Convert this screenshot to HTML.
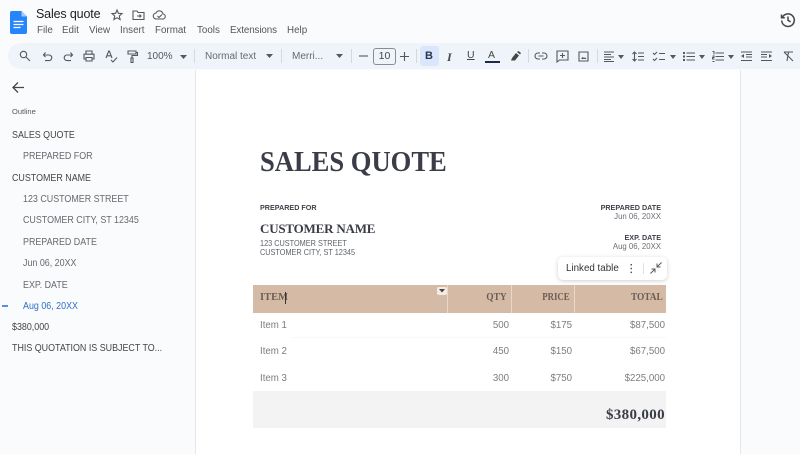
<!DOCTYPE html>
<html><head><meta charset="utf-8"><style>
html,body{margin:0;padding:0;width:800px;height:454px;overflow:hidden}
body{position:relative;background:#f9fbfd;font-family:"Liberation Sans",sans-serif;color:#444746}
.t{position:absolute;white-space:nowrap;line-height:1}
.r{text-align:right}
svg{position:absolute;overflow:visible}
.i{fill:none;stroke:#555859;stroke-width:1.1}
.f{fill:#555859;stroke:none}
.s{font-family:"Liberation Serif",serif;font-weight:bold}
.m{font-size:9.8px;color:#555859;top:26px}
.o{font-size:10.2px;color:#444746;transform:scaleX(.874);transform-origin:0 0}
.a{font-size:8.5px;color:#5f6368;transform:scaleX(.86);transform-origin:0 0}
.d{position:absolute;width:1px;background:#d5d8dc;top:49px;height:14px}
.h{font-size:10.5px;color:#6b5c54;top:293px;transform-origin:100% 0}
</style></head><body>

<svg style="left:10px;top:11px" width="18" height="23" viewBox="0 0 18 23"><path d="M2 0H11.500L17 5.500V21a2 2 0 0 1-2 2H2a2 2 0 0 1-2-2V2a2 2 0 0 1 2-2z" fill="#2684fc"/><path d="M11.500 0L17 5.500H11.500z" fill="#a6c8fa"/><path d="M3.500 10.500h10M3.500 13.500h10M3.500 16.500h7" stroke="#fff" stroke-width="1.200"/></svg>

<div class="t" style="left:36px;top:8px;font-size:12.500px;letter-spacing:-.15px;color:#1f1f1f">Sales quote</div>
<svg style="left:111px;top:9px" width="12" height="12" viewBox="0 0 12 12"><path class="i" d="M6 1l1.400 3.300 3.600.3-2.700 2.400.8 3.500L6 8.700 2.900 10.500l.8-3.500L1 4.600l3.600-.3z"/></svg>
<svg style="left:132px;top:9px" width="13" height="12" viewBox="0 0 13 12"><path class="i" d="M1 2h4l1 1.500h6v7H1zM5 7h4M7.500 5.500L9 7 7.500 8.500"/></svg>
<svg style="left:153px;top:9px" width="13" height="12" viewBox="0 0 13 12"><path class="i" d="M3.500 10h6a2.500 2.500 0 0 0 .5-5A3.700 3.700 0 0 0 3 4a3 3 0 0 0 .5 6zM4.500 7l1.500 1.500L9 5.500"/></svg>

<div class="t m" style="left:37px">File</div>
<div class="t m" style="left:62px">Edit</div>
<div class="t m" style="left:89px">View</div>
<div class="t m" style="left:120px">Insert</div>
<div class="t m" style="left:155px">Format</div>
<div class="t m" style="left:197px">Tools</div>
<div class="t m" style="left:230px;letter-spacing:-.1px">Extensions</div>
<div class="t m" style="left:287px">Help</div>

<svg style="left:780px;top:12px" width="16" height="16" viewBox="0 0 16 16"><path d="M2.300 5.500A6.300 6.300 0 1 1 1.700 8.500M1.500 2.500v3.300h3.300M8 4.500V8.300l2.600 1.600" fill="none" stroke="#444746" stroke-width="1.500"/></svg>

<div style="position:absolute;left:8px;top:43px;width:792px;height:26px;background:#eff3fa;border-radius:13px 0 0 13px"></div>

<svg style="left:19px;top:50px" width="12" height="12" viewBox="0 0 12 12"><circle class="i" cx="4.500" cy="4.500" r="3.200"/><path class="i" d="M7 7l4 4"/></svg>
<svg style="left:42px;top:51px" width="11" height="11" viewBox="0 0 11 11"><path class="i" d="M2 4h5a2.800 2.800 0 0 1 0 5.600H3M3.500 1.500L1.500 4l2 2"/></svg>
<svg style="left:63px;top:51px" width="11" height="11" viewBox="0 0 11 11"><path class="i" d="M9 4H4a2.800 2.800 0 0 0 0 5.600H8M7.500 1.500L9.500 4l-2 2"/></svg>
<svg style="left:83px;top:50px" width="12" height="12" viewBox="0 0 12 12"><path class="i" d="M3 4V1h6v3M3 9H1V4.200h10V9H9M3 7.500h6V11H3z"/></svg>
<svg style="left:105px;top:50px" width="13" height="13" viewBox="0 0 13 13"><path class="i" d="M1 8L3.700 1h.6L7 8M2 5.800h4M6 10l2 2 4-4.500"/></svg>
<svg style="left:126px;top:50px" width="12" height="13" viewBox="0 0 12 13"><path class="i" d="M2 1h8v3H2zM10 2.500h1.500v3H6V8M5 8h2v4.500H5z"/></svg>
<div class="t" style="left:147px;top:52px;font-size:10px;color:#555859">100%</div>
<svg style="left:180px;top:55px" width="7" height="4"><path class="f" d="M0 0h7L3.500 4z"/></svg>
<div class="d" style="left:194px"></div>
<div class="t" style="left:205px;top:52px;font-size:10px;color:#666a6e">Normal text</div>
<svg style="left:266px;top:54px" width="7" height="4"><path class="f" d="M0 0h7L3.500 4z"/></svg>
<div class="d" style="left:281px"></div>
<div class="t" style="left:292px;top:52px;font-size:10px;color:#666a6e">Merri...</div>
<svg style="left:336px;top:54px" width="7" height="4"><path class="f" d="M0 0h7L3.500 4z"/></svg>
<div class="d" style="left:351px"></div>
<svg style="left:359px;top:51px" width="10" height="10"><path class="i" d="M0 5h9"/></svg>
<div style="position:absolute;left:373px;top:48px;width:21px;height:15px;border:1px solid #8a8d8f;border-radius:3px"></div>
<div class="t" style="left:373px;top:51px;width:23px;text-align:center;font-size:10.500px;color:#444746">10</div>
<svg style="left:400px;top:52px" width="10" height="10"><path class="i" d="M0 4.500h9M4.500 0v9"/></svg>
<div class="d" style="left:416px"></div>
<div style="position:absolute;left:420px;top:46px;width:19px;height:20px;background:#d9e6fb;border-radius:3px"></div>
<div class="t" style="left:425px;top:51px;font-size:11px;font-weight:bold;color:#27364f">B</div>
<div class="t" style="left:447px;top:51px;font-size:12px;font-style:italic;font-family:'Liberation Serif',serif;font-weight:bold;color:#444746">I</div>
<div class="t" style="left:467px;top:50px;font-size:10.500px;text-decoration:underline;color:#444746">U</div>
<div class="t" style="left:488px;top:50px;font-size:10.500px;color:#444746">A</div>
<div style="position:absolute;left:485px;top:61px;width:15px;height:2px;background:#1f2a44"></div>
<svg style="left:510px;top:50px" width="12" height="12" viewBox="0 0 12 12"><path d="M1 10.500l1-2.500 4-5 3 2.500-4 5z" fill="#444746"/><path d="M7 2l1.500-1 2.500 2-1 1.500z" fill="#444746"/></svg>
<div class="d" style="left:528px"></div>
<svg style="left:535px;top:51px" width="12" height="10" viewBox="0 0 12 10"><path class="i" d="M5 2H3a3 3 0 0 0 0 6h2M7 2h2a3 3 0 0 1 0 6H7M3.500 5h5"/></svg>
<svg style="left:556px;top:50px" width="13" height="13" viewBox="0 0 13 13"><path class="i" d="M1 1h11v9H3.500L1 12zM6.500 3v5M4 5.500h5"/></svg>
<svg style="left:578px;top:51px" width="11" height="11" viewBox="0 0 11 11"><path class="i" d="M1 1h9v9H1z"/><path class="f" d="M3 8l1.800-2.200 1.200 1.400 1-1L8.500 8z"/></svg>
<div class="d" style="left:597px"></div>
<svg style="left:604px;top:51px" width="11" height="11" viewBox="0 0 11 11"><path class="i" style="stroke-width:1" d="M0 1h10M0 3.500h7M0 6h10M0 8.500h7M0 10.500h10"/></svg>
<svg style="left:618px;top:55px" width="6" height="4"><path class="f" d="M0 0h6L3 4z"/></svg>
<svg style="left:632px;top:51px" width="12" height="11" viewBox="0 0 12 11"><path class="i" d="M2.500 1v9M.5 3l2-2 2 2M.5 8l2 2 2-2M6 2h6M6 5.500h6M6 9h6"/></svg>
<svg style="left:653px;top:51px" width="12" height="11" viewBox="0 0 12 11"><path class="i" d="M0 2l1.500 1.500L4 1M0 8l1.500 1.500L4 7M6 2.500h6M6 8.500h6"/></svg>
<svg style="left:670px;top:55px" width="6" height="4"><path class="f" d="M0 0h6L3 4z"/></svg>
<svg style="left:683px;top:51px" width="12" height="11" viewBox="0 0 12 11"><path class="i" d="M3.500 2h8.500M3.500 5.500h8.500M3.500 9h8.500"/><path class="f" d="M0 1h2v2H0zM0 4.500h2v2H0zM0 8h2v2H0z"/></svg>
<svg style="left:699px;top:55px" width="6" height="4"><path class="f" d="M0 0h6L3 4z"/></svg>
<svg style="left:712px;top:51px" width="12" height="11" viewBox="0 0 12 11"><path class="i" style="stroke-width:1" d="M3.500 2h8.500M3.500 5.500h8.500M3.500 9h8.500M.5 .5h1.500v3M.5 5h1.500v1.500h-1.500V8h2M.5 10.500h2"/></svg>
<svg style="left:728px;top:55px" width="6" height="4"><path class="f" d="M0 0h6L3 4z"/></svg>
<svg style="left:741px;top:51px" width="12" height="11" viewBox="0 0 12 11"><path class="i" style="stroke-width:1" d="M0 1h11M5 3.500h6M5 6h6M0 9.500h11"/><path class="f" d="M3 3v4L0 5z"/></svg>
<svg style="left:761px;top:51px" width="12" height="11" viewBox="0 0 12 11"><path class="i" style="stroke-width:1" d="M0 1h11M0 3.500h6M0 6h6M0 9.500h11"/><path class="f" d="M8 3v4l3-2z"/></svg>
<svg style="left:783px;top:51px" width="12" height="11" viewBox="0 0 12 11"><path class="i" d="M1 1h9M5.500 1L4 10M1 1l9 9"/></svg>

<svg style="left:12px;top:81px" width="13" height="13" viewBox="0 0 13 13"><path d="M12 6.500H1.500M6 1.500L1 6.500l5 5" fill="none" stroke="#444746" stroke-width="1.300"/></svg>
<div class="t" style="left:12px;top:108px;font-size:7.500px;color:#555859">Outline</div>
<div class="t o" style="left:12px;top:131px">SALES QUOTE</div>
<div class="t o" style="left:23px;top:152px;color:#666a6e">PREPARED FOR</div>
<div class="t o" style="left:12px;top:174px">CUSTOMER NAME</div>
<div class="t o" style="left:23px;top:195px;color:#666a6e">123 CUSTOMER STREET</div>
<div class="t o" style="left:23px;top:216px;color:#666a6e">CUSTOMER CITY, ST 12345</div>
<div class="t o" style="left:23px;top:238px;color:#666a6e">PREPARED DATE</div>
<div class="t o" style="left:23px;top:259px;color:#666a6e">Jun 06, 20XX</div>
<div class="t o" style="left:23px;top:281px;color:#666a6e">EXP. DATE</div>
<div style="position:absolute;left:2px;top:305px;width:6px;height:1.500px;background:#5a8fdc"></div>
<div class="t o" style="left:23px;top:302px;color:#2f6fc6">Aug 06, 20XX</div>
<div class="t o" style="left:12px;top:323px">$380,000</div>
<div class="t o" style="left:12px;top:344px">THIS QUOTATION IS SUBJECT TO...</div>

<div style="position:absolute;left:195px;top:70px;width:544px;height:384px;background:#fff;border-left:1px solid #e3e6ea;border-right:1px solid #e3e6ea"></div>

<div class="t s" style="left:260px;top:148px;font-size:29px;color:#3a3d47;transform:scaleX(.916);transform-origin:0 0">SALES QUOTE</div>
<div class="t" style="left:260px;top:204px;font-size:7.200px;font-weight:bold;color:#3f424a">PREPARED FOR</div>
<div class="t s" style="left:260px;top:221.500px;font-size:13px;letter-spacing:-.2px;color:#3a3d47">CUSTOMER NAME</div>
<div class="t a" style="left:260px;top:239px">123 CUSTOMER STREET</div>
<div class="t a" style="left:260px;top:248px">CUSTOMER CITY, ST 12345</div>

<div class="t r" style="right:139px;top:204px;font-size:7.200px;font-weight:bold;color:#3f424a">PREPARED DATE</div>
<div class="t r" style="right:139px;top:213px;font-size:7.800px;color:#6b6e73">Jun 06, 20XX</div>
<div class="t r" style="right:139px;top:234px;font-size:7.200px;font-weight:bold;color:#3f424a">EXP. DATE</div>
<div class="t r" style="right:139px;top:243px;font-size:7.800px;color:#6b6e73">Aug 06, 20XX</div>

<div style="position:absolute;left:253px;top:285px;width:413px;height:28px;background:#d5bba5"></div>
<div style="position:absolute;left:447px;top:285px;width:1px;height:28px;background:#e6d8cc"></div>
<div style="position:absolute;left:511px;top:285px;width:1px;height:28px;background:#e6d8cc"></div>
<div style="position:absolute;left:574px;top:285px;width:1px;height:28px;background:#e6d8cc"></div>
<div style="position:absolute;left:437px;top:287px;width:10px;height:8px;background:#f3ebe4;border-radius:2px"></div>
<svg style="left:439px;top:289px" width="6" height="4"><path d="M0 0h6L3 3.500z" fill="#444"/></svg>
<div class="t s" style="left:260px;top:293px;font-size:10.500px;color:#6b5c54">ITEM</div>
<div style="position:absolute;left:285px;top:292px;width:1px;height:12px;background:#333"></div>
<div class="t s r h" style="right:293px;transform:scaleX(.9)">QTY</div>
<div class="t s r h" style="right:230px;transform:scaleX(.84)">PRICE</div>
<div class="t s r h" style="right:137px;transform:scaleX(.89)">TOTAL</div>

<div style="position:absolute;left:290px;top:337px;width:376px;height:1px;background:#f7f8f8"></div>
<div class="t" style="left:260px;top:321px;font-size:9.700px;color:#7d7d7d">Item 1</div>
<div class="t r" style="right:291px;top:321px;font-size:9.700px;color:#7d7d7d">500</div>
<div class="t r" style="right:228px;top:321px;font-size:9.700px;color:#7d7d7d">$175</div>
<div class="t r" style="right:135px;top:321px;font-size:9.700px;color:#7d7d7d">$87,500</div>
<div class="t" style="left:260px;top:346.500px;font-size:9.700px;color:#7d7d7d">Item 2</div>
<div class="t r" style="right:291px;top:346.500px;font-size:9.700px;color:#7d7d7d">450</div>
<div class="t r" style="right:228px;top:346.500px;font-size:9.700px;color:#7d7d7d">$150</div>
<div class="t r" style="right:135px;top:346.500px;font-size:9.700px;color:#7d7d7d">$67,500</div>
<div class="t" style="left:260px;top:373.500px;font-size:9.700px;color:#7d7d7d">Item 3</div>
<div class="t r" style="right:291px;top:373.500px;font-size:9.700px;color:#7d7d7d">300</div>
<div class="t r" style="right:228px;top:373.500px;font-size:9.700px;color:#7d7d7d">$750</div>
<div class="t r" style="right:135px;top:373.500px;font-size:9.700px;color:#7d7d7d">$225,000</div>

<div style="position:absolute;left:253px;top:391px;width:413px;height:37px;background:#f3f3f3"></div>
<div class="t s r" style="right:135px;top:408px;font-size:15px;color:#3a3d47;letter-spacing:.35px">$380,000</div>

<div style="position:absolute;left:558px;top:257px;width:109px;height:23px;background:#fff;border-radius:5px;box-shadow:0 1px 4px rgba(60,64,67,.25)"></div>
<div class="t" style="left:566px;top:263.500px;font-size:10.300px;color:#333;transform:scaleX(.95);transform-origin:0 0">Linked table</div>
<svg style="left:630px;top:264px" width="3" height="10"><path class="f" d="M.5 0h1.500v1.500H.5zM.5 3.800h1.500v1.500H.5zM.5 7.600h1.500v1.500H.5z"/></svg>
<div style="position:absolute;left:643px;top:263px;width:1px;height:11px;background:#e0e0e0"></div>
<svg style="left:650px;top:262px" width="12" height="12" viewBox="0 0 12 12"><path class="i" style="stroke-width:1" d="M11.500.5L7 5M7 1.500V5h3.500M.5 11.500L5 7M1.500 7H5v3.500"/></svg>
</body></html>
